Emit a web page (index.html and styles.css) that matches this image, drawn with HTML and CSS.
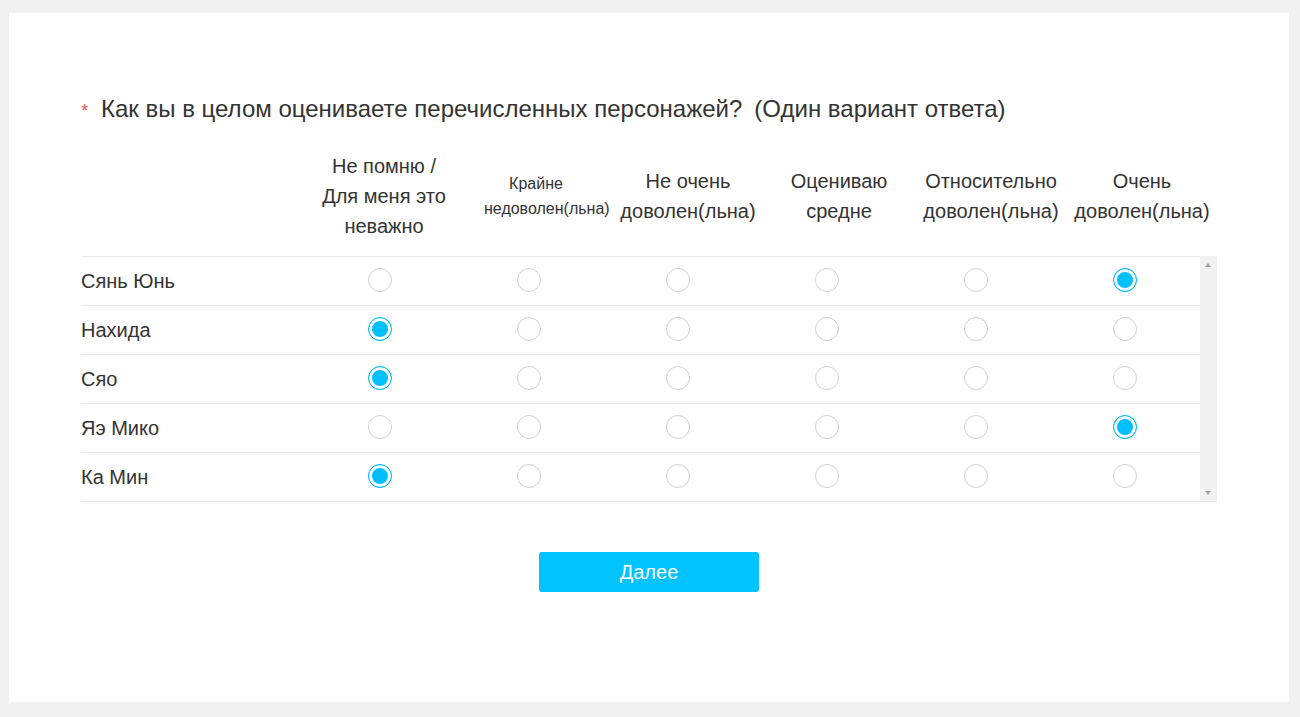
FILE: index.html
```html
<!DOCTYPE html>
<html lang="ru">
<head>
    <meta charset="UTF-8">
    <meta name="viewport" content="width=device-width, initial-scale=1.0">
    <title>Опрос</title>
    <link rel="stylesheet" href="styles.css">
</head>
<body>
    <div class="card">
        <div class="question">
            <span class="req">*</span>
            <span class="q-text">Как вы в целом оцениваете перечисленных персонажей?</span>
            <span class="q-hint">(Один вариант ответа)</span>
        </div>

        <div class="matrix">
            <div class="head">
                <div class="h-label"></div>
                <div class="h-col w190">Не помню /<br>Для меня это<br>неважно</div>
                <div class="h-col w134 small"><div class="narrow">Крайне недоволен(льна)</div></div>
                <div class="h-col w150">Не очень<br>доволен(льна)</div>
                <div class="h-col w152">Оцениваю<br>средне</div>
                <div class="h-col w152">Относительно<br>доволен(льна)</div>
                <div class="h-col w150">Очень<br>доволен(льна)</div>
            </div>

            <div class="body">
                <div class="rows">
                    <div class="row">
                        <div class="label-cell">Сянь Юнь</div>
                        <div class="col"><span class="radio"></span></div>
                        <div class="col"><span class="radio"></span></div>
                        <div class="col"><span class="radio"></span></div>
                        <div class="col"><span class="radio"></span></div>
                        <div class="col"><span class="radio"></span></div>
                        <div class="col"><span class="radio checked"></span></div>
                    </div>
                    <div class="row">
                        <div class="label-cell">Нахида</div>
                        <div class="col"><span class="radio checked"></span></div>
                        <div class="col"><span class="radio"></span></div>
                        <div class="col"><span class="radio"></span></div>
                        <div class="col"><span class="radio"></span></div>
                        <div class="col"><span class="radio"></span></div>
                        <div class="col"><span class="radio"></span></div>
                    </div>
                    <div class="row">
                        <div class="label-cell">Сяо</div>
                        <div class="col"><span class="radio checked"></span></div>
                        <div class="col"><span class="radio"></span></div>
                        <div class="col"><span class="radio"></span></div>
                        <div class="col"><span class="radio"></span></div>
                        <div class="col"><span class="radio"></span></div>
                        <div class="col"><span class="radio"></span></div>
                    </div>
                    <div class="row">
                        <div class="label-cell">Яэ Мико</div>
                        <div class="col"><span class="radio"></span></div>
                        <div class="col"><span class="radio"></span></div>
                        <div class="col"><span class="radio"></span></div>
                        <div class="col"><span class="radio"></span></div>
                        <div class="col"><span class="radio"></span></div>
                        <div class="col"><span class="radio checked"></span></div>
                    </div>
                    <div class="row">
                        <div class="label-cell">Ка Мин</div>
                        <div class="col"><span class="radio checked"></span></div>
                        <div class="col"><span class="radio"></span></div>
                        <div class="col"><span class="radio"></span></div>
                        <div class="col"><span class="radio"></span></div>
                        <div class="col"><span class="radio"></span></div>
                        <div class="col"><span class="radio"></span></div>
                    </div>
                </div>
                <div class="scrollbar">
                    <span class="arrow-up"></span>
                    <span class="arrow-down"></span>
                </div>
            </div>
        </div>

        <div class="actions">
            <button type="button" class="next">Далее</button>
        </div>
    </div>
</body>
</html>
```

FILE: styles.css
```css
body {
    margin: 0;
    background-color: #f1f1f1;
    font-family: "Liberation Sans", Arial, sans-serif;
    color: #333;
}
.card {
    width: 1280px;
    height: 689px;
    margin: 13px 0 0 9px;
    background-color: white;
    padding: 81px 0 0 72px;
    box-sizing: border-box;
}
.question {
    display: flex;
    align-items: baseline;
    height: 30px;
    line-height: 30px;
    font-size: 24px;
}
.req {
    color: #f05a5a;
    font-size: 19px;
    width: 20px;
}
.q-hint {
    margin-left: 12px;
}
.matrix {
    width: 1136px;
    margin-top: 10px;
}
/* шапка таблицы: ширины колонок как в авто-раскладке исходной таблицы */
.head {
    display: flex;
    align-items: center;
    height: 122px;
}
.h-label {
    width: 208px;
}
.h-col {
    text-align: center;
    font-size: 20px;
    line-height: 30px;
    padding-top: 2px;
}
.h-col.small {
    font-size: 16px;
    line-height: 25px;
}
.narrow {
    width: 104px;
    margin-left: 5px;
}
.w190 { width: 190px; }
.w134 { width: 134px; }
.w150 { width: 150px; }
.w152 { width: 152px; }
.body {
    display: flex;
    border-bottom: 1px solid #e9e9e9;
}
.rows {
    width: 1119px;
}
.row {
    display: flex;
    align-items: center;
    height: 48px;
    border-top: 1px solid #e9e9e9;
}
.label-cell {
    width: 224px;
    flex-shrink: 0;
    font-size: 20px;
}
.col {
    width: 149px;
    flex-shrink: 0;
    display: flex;
    justify-content: center;
    align-items: center;
}
.radio {
    width: 24px;
    height: 24px;
    margin-bottom: 3px;
    border: 1px solid #d0d0d0;
    border-radius: 50%;
    box-sizing: border-box;
    background-color: white;
}
.radio.checked {
    border-color: #00bfff;
    background-color: #00bfff;
    box-shadow: inset 0 0 0 3px white;
}
.scrollbar {
    width: 17px;
    background-color: #f1f1f1;
    position: relative;
}
.arrow-up, .arrow-down {
    position: absolute;
    left: 5px;
    width: 0;
    height: 0;
    border-left: 3.5px solid transparent;
    border-right: 3.5px solid transparent;
}
.arrow-up {
    top: 7px;
    border-bottom: 4px solid #a3a3a3;
}
.arrow-down {
    bottom: 6px;
    border-top: 4px solid #a3a3a3;
}
.actions {
    width: 1136px;
    display: flex;
    justify-content: center;
    margin-top: 50px;
}
.next {
    width: 220px;
    height: 40px;
    background-color: #00c3ff;
    color: white;
    border: none;
    border-radius: 3px;
    font-family: "Liberation Sans", Arial, sans-serif;
    font-size: 20px;
    cursor: pointer;
}
```
